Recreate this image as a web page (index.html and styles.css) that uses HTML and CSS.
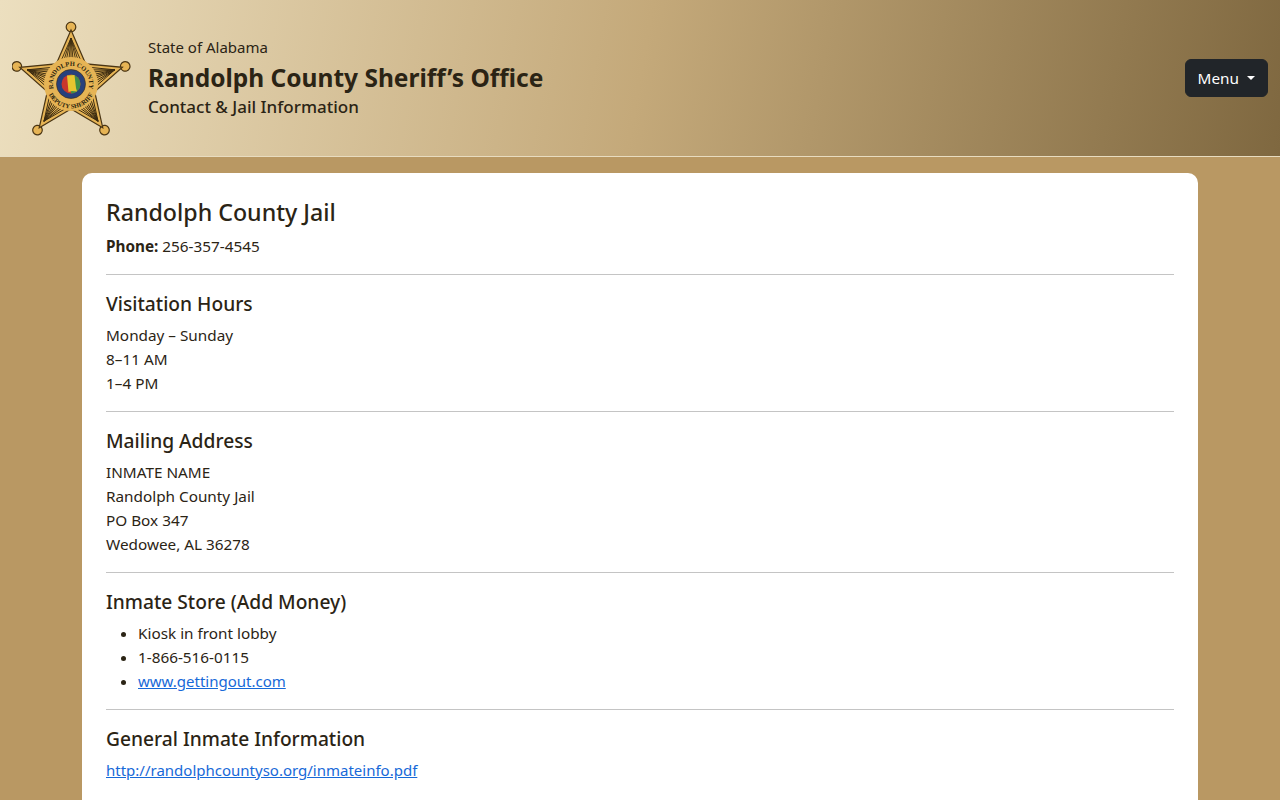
FILE: index.html
```html
<!DOCTYPE html>
<html lang="en">
<head>
    <meta charset="UTF-8">
    <title>Randolph County Sheriff's Office - Contact &amp; Jail Information</title>
    <link rel="stylesheet" href="styles.css">
</head>
<body>
    <header class="site-header">
        <div class="brand">
            <svg class="badge" width="120" height="115" viewBox="0 0 120 115" role="img" aria-label="Randolph County Deputy Sheriff badge">
                <defs>
                    <g id="arm">
                        <circle cx="59" cy="6" r="4.8" fill="#e6b455" stroke="#4a3514" stroke-width="1.2"/>
                        <path d="M59 9 L75 46 L43 46 Z" fill="#e6b455" stroke="#4a3514" stroke-width="1.2"/>
                        <path d="M59 17 L49 40 M59 17 L52 39 M59 17 L54.5 38 M59 17 L57 38 M59 17 L59 38 M59 17 L61 38 M59 17 L63.5 38 M59 17 L66 39 M59 17 L69 40" stroke="#3a2a10" stroke-width="0.9"/>
                    </g>
                    <path id="arc-top" d="M59 81 A18 18 0 1 1 59.01 81"/>
                    <path id="arc-bottom" d="M59 38.5 A24.5 24.5 0 1 0 59.01 38.5"/>
                </defs>
                <use href="#arm"/>
                <use href="#arm" transform="rotate(72 59 63)"/>
                <use href="#arm" transform="rotate(144 59 63)"/>
                <use href="#arm" transform="rotate(216 59 63)"/>
                <use href="#arm" transform="rotate(288 59 63)"/>
                <circle cx="59" cy="63" r="27" fill="#e6b455"/>
                <text class="badge-text"><textPath href="#arc-top" startOffset="50%" text-anchor="middle">RANDOLPH COUNTY</textPath></text>
                <text class="badge-text"><textPath href="#arc-bottom" startOffset="50%" text-anchor="middle">DEPUTY SHERIFF</textPath></text>
                <circle cx="59" cy="63" r="14.5" fill="#27407c" stroke="#3d2c10" stroke-width="0.6"/>
                <circle cx="59" cy="63" r="9.5" fill="#c9372c"/>
                <path d="M59 53.5a9.5 9.5 0 0 1 0 19z" fill="#3f8f4a"/>
                <path d="M55 54.5 L62.5 54 L64 67 L65 70.5 L60 70 L56.5 71 Z" fill="#e8c52f"/>
            </svg>
            <div class="brand-text">
                <div class="state">State of Alabama</div>
                <div class="office">Randolph County Sheriff’s Office</div>
                <div class="subtitle">Contact &amp; Jail Information</div>
            </div>
        </div>
        <button class="menu-btn" type="button">Menu<span class="caret"></span></button>
    </header>

    <main class="card">
        <h1>Randolph County Jail</h1>
        <p><strong>Phone:</strong> 256-357-4545</p>
        <hr>
        <h2>Visitation Hours</h2>
        <p>Monday – Sunday<br>8–11 AM<br>1–4 PM</p>
        <hr>
        <h2>Mailing Address</h2>
        <p>INMATE NAME<br>Randolph County Jail<br>PO Box 347<br>Wedowee, AL 36278</p>
        <hr>
        <h2>Inmate Store (Add Money)</h2>
        <ul>
            <li>Kiosk in front lobby</li>
            <li>1-866-516-0115</li>
            <li><a href="#">www.gettingout.com</a></li>
        </ul>
        <hr>
        <h2>General Inmate Information</h2>
        <p><a href="#">http://randolphcountyso.org/inmateinfo.pdf</a></p>
    </main>
</body>
</html>
```

FILE: styles.css
```css
* {
    box-sizing: border-box;
}
body {
    margin: 0;
    font-family: "Noto Sans", sans-serif;
    font-size: 15.3px;
    line-height: 24px;
    color: #2b2415;
    background-color: #b99863;
}
.site-header {
    display: flex;
    align-items: center;
    justify-content: space-between;
    height: 157px;
    padding: 0 12px;
    background: linear-gradient(100deg, #ecdfbf 0%, #c4a97a 50%, #7f6840 100%);
    border-bottom: 1px solid #e8dcc0;
}
.brand {
    display: flex;
    align-items: center;
    gap: 16px;
}
.badge-text {
    font-family: "Liberation Serif", serif;
    font-size: 6.4px;
    font-weight: 700;
    fill: #2b1f0c;
}
.brand-text {
    padding-bottom: 4px;
}
.state {
    font-size: 15px;
    line-height: 23px;
}
.office {
    font-size: 24.5px;
    font-weight: 700;
    line-height: 37px;
}
.subtitle {
    font-size: 17px;
    font-weight: 500;
    line-height: 21px;
}
.menu-btn {
    display: flex;
    align-items: center;
    height: 38px;
    padding: 0 12px;
    font: inherit;
    color: #fff;
    background-color: #212529;
    border: 1px solid #212529;
    border-radius: 6px;
}
.caret {
    margin-left: 8px;
    border-top: 4.8px solid #fff;
    border-left: 4.8px solid transparent;
    border-right: 4.8px solid transparent;
}
.card {
    max-width: 1116px;
    margin: 16px auto 0;
    padding: 24px;
    background-color: #fff;
    border-radius: 10px;
}
h1 {
    margin: 0 0 8px;
    padding-top: 1px;
    font-size: 23.2px;
    font-weight: 500;
    line-height: 28px;
}
h2 {
    margin: 0 0 8px;
    padding-top: 1px;
    font-size: 19.2px;
    font-weight: 500;
    line-height: 23px;
}
p, ul {
    margin: 0 0 16px;
}
ul {
    padding-left: 32px;
}
hr {
    margin: 16px 0;
    border: 0;
    border-top: 1px solid #c4c4c4;
}
a {
    font-size: 15px;
    color: #1769d8;
}
```
